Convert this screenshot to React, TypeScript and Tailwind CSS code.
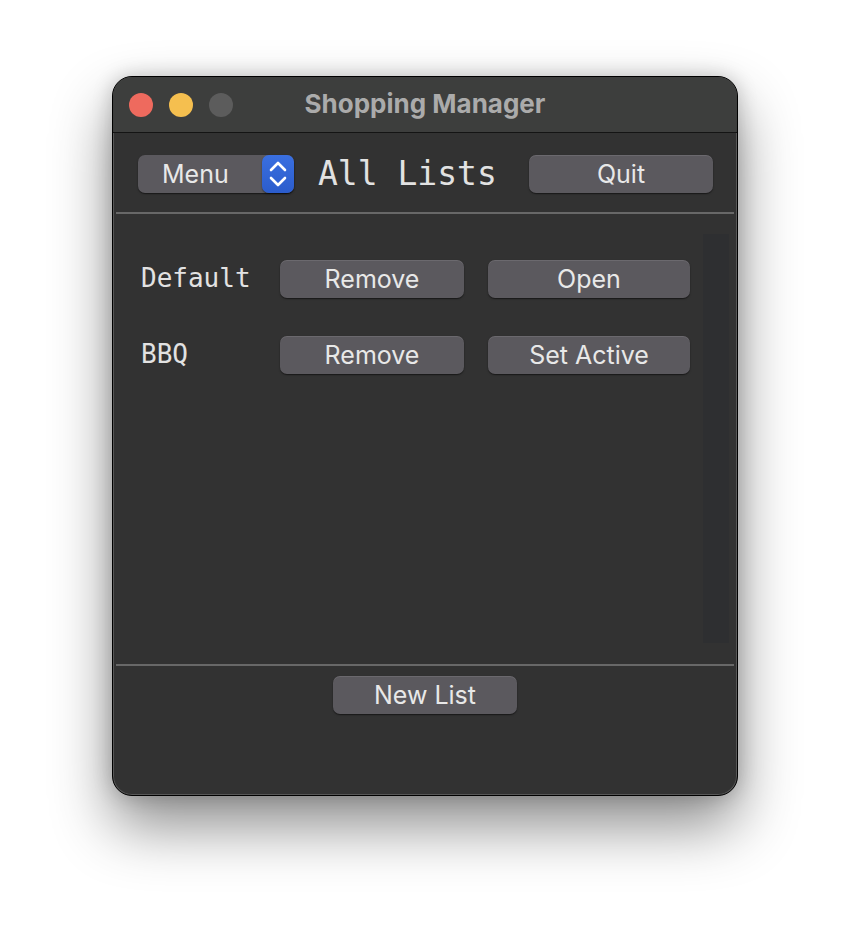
import React from "react";

const uiFont = { fontFamily: "Inter, 'Liberation Sans', sans-serif" };
const monoFont = { fontFamily: "'DejaVu Sans Mono', 'Liberation Mono', monospace" };

interface MacButtonProps {
  width: string;
  children: React.ReactNode;
}

const MacButton: React.FC<MacButtonProps> = ({ width, children }) => (
  <button
    className={`${width} h-[38px] shrink-0 rounded-[7px] bg-[#5b595e] pt-[1px] text-[25px] leading-none text-[#e8e8e8] shadow-[0_1px_1.5px_rgba(0,0,0,0.55),inset_0_1px_0_rgba(255,255,255,0.1)]`}
    style={uiFont}
  >
    {children}
  </button>
);

const Stepper = () => (
  <div className="flex h-[38px] w-[32px] items-center justify-center rounded-[7px] bg-gradient-to-b from-[#3a6fe0] to-[#2b5ccc] shadow-[0_1px_1.5px_rgba(0,0,0,0.5)]">
    <svg width="32" height="38" viewBox="0 0 32 38" fill="none">
      <path d="M9 15 L16 8 L23 15" stroke="white" strokeWidth="2.6" strokeLinecap="round" strokeLinejoin="round" />
      <path d="M9 23 L16 30 L23 23" stroke="white" strokeWidth="2.6" strokeLinecap="round" strokeLinejoin="round" />
    </svg>
  </div>
);

const lists = [
  { name: "Default", action: "Open" },
  { name: "BBQ", action: "Set Active" },
];

export default function App() {
  return (
    <div className="min-h-[944px] w-full bg-white pt-[76px]">
      <div className="mx-auto flex h-[720px] w-[626px] flex-col overflow-hidden rounded-[20px] border border-black bg-[#323232] shadow-[0_30px_60px_rgba(0,0,0,0.45),0_0_20px_rgba(0,0,0,0.2),inset_0_0_0_1px_rgba(255,255,255,0.18)]">
        {/* title bar */}
        <div className="relative flex h-[56px] shrink-0 items-center border-b border-[#141414] bg-[#3d3e3d] px-[16px]">
          <div className="flex gap-[16px]">
            <span className="h-[24px] w-[24px] rounded-full bg-[#ee6a5e]" />
            <span className="h-[24px] w-[24px] rounded-full bg-[#f5bf4f]" />
            <span className="h-[24px] w-[24px] rounded-full bg-[#5c5c5c]" />
          </div>
          <div
            className="absolute inset-x-0 top-0 flex h-[56px] items-center justify-center pb-[3px] text-[26px] font-bold text-[#ababab]"
            style={uiFont}
          >
            Shopping Manager
          </div>
        </div>

        {/* toolbar */}
        <div className="flex h-[79px] shrink-0 items-center pl-[25px] pr-[24px] pt-[2px]">
          <div className="flex h-[38px] w-[156px] items-center rounded-[7px] bg-[#5b595e] shadow-[0_1px_1.5px_rgba(0,0,0,0.55)]">
            <span className="flex-1 pl-[24px] pt-[1px] text-[25px] leading-none text-[#e8e8e8]" style={uiFont}>
              Menu
            </span>
            <Stepper />
          </div>
          <span className="ml-[24px] text-[33px] leading-none text-[#e2e2e2]" style={monoFont}>
            All Lists
          </span>
          <div className="flex-1" />
          <MacButton width="w-[184px]">Quit</MacButton>
        </div>

        <div className="mx-[3px] h-[2px] shrink-0 bg-[#686868]" />

        {/* list area */}
        <div className="flex h-[450px] shrink-0">
          <div className="flex flex-1 flex-col gap-[38px] pl-[28px] pt-[46px]">
            {lists.map((item) => (
              <div key={item.name} className="flex items-center">
                <span className="w-[139px] pb-[3px] text-[26px] leading-none text-[#e2e2e2]" style={monoFont}>
                  {item.name}
                </span>
                <MacButton width="w-[184px]">Remove</MacButton>
                <div className="w-[24px]" />
                <MacButton width="w-[202px]">{item.action}</MacButton>
              </div>
            ))}
          </div>
          <div className="mb-[21px] mr-[8px] mt-[20px] w-[26px] bg-[#2e2f31]" />
        </div>

        <div className="mx-[3px] h-[2px] shrink-0 bg-[#686868]" />

        {/* footer */}
        <div className="flex justify-center pt-[10px]">
          <MacButton width="w-[184px]">New List</MacButton>
        </div>
      </div>
    </div>
  );
}
